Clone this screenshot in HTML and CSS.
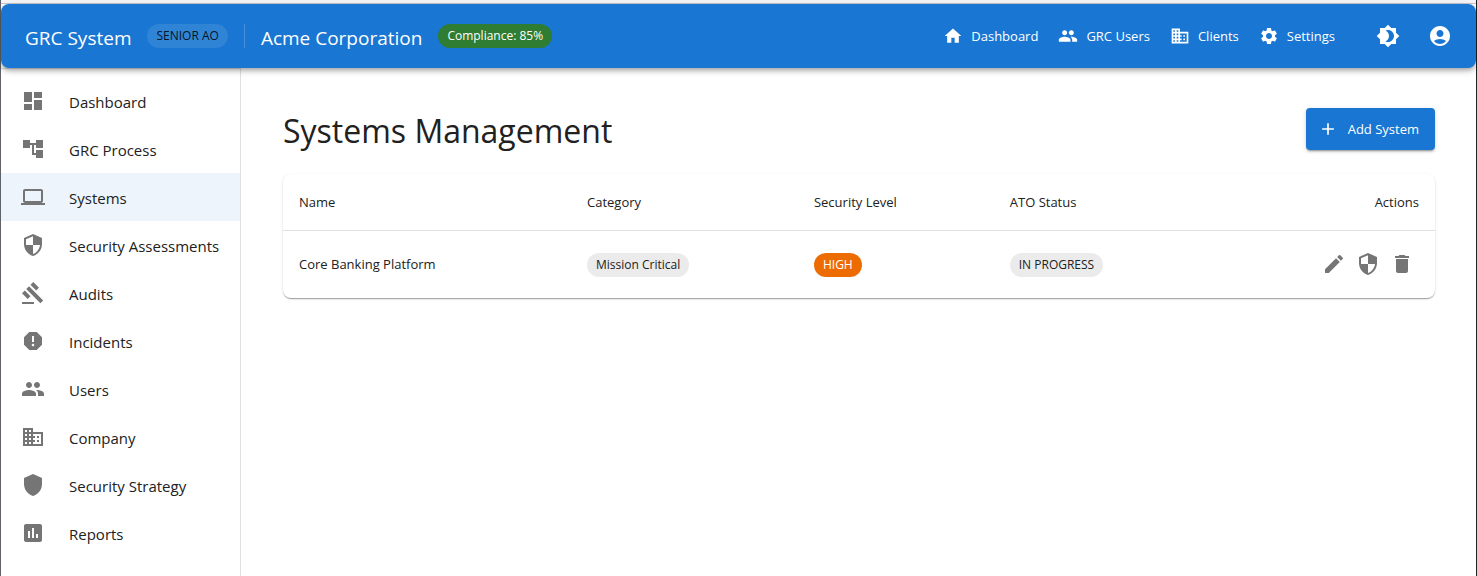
FILE: index.html
```html
<!DOCTYPE html>
<html lang="en">
<head>
<meta charset="utf-8">
<meta name="viewport" content="width=device-width, initial-scale=1">
<title>Systems Management</title>
<link rel="stylesheet" href="styles.css">
</head>
<body>
<svg class="sprite" aria-hidden="true">
  <symbol id="i-home" viewBox="0 0 24 24"><path d="M10 20v-6h4v6h5v-8h3L12 3 2 12h3v8z"/></symbol>
  <symbol id="i-people" viewBox="0 0 24 24"><path d="M16 11c1.66 0 2.99-1.34 2.99-3S17.66 5 16 5c-1.66 0-3 1.34-3 3s1.34 3 3 3zm-8 0c1.66 0 2.99-1.34 2.99-3S9.66 5 8 5C6.34 5 5 6.34 5 8s1.34 3 3 3zm0 2c-2.33 0-7 1.17-7 3.5V19h14v-2.5c0-2.33-4.67-3.5-7-3.5zm8 0c-.29 0-.62.02-.97.05 1.16.84 1.97 1.97 1.97 3.45V19h6v-2.5c0-2.33-4.67-3.5-7-3.5z"/></symbol>
  <symbol id="i-business" viewBox="0 0 24 24"><path d="M12 7V3H2v18h20V7H12zM6 19H4v-2h2v2zm0-4H4v-2h2v2zm0-4H4V9h2v2zm0-4H4V5h2v2zm4 12H8v-2h2v2zm0-4H8v-2h2v2zm0-4H8V9h2v2zm0-4H8V5h2v2zm10 12h-8v-2h2v-2h-2v-2h2v-2h-2V9h8v10zm-2-8h-2v2h2v-2zm0 4h-2v2h2v-2z"/></symbol>
  <symbol id="i-settings" viewBox="0 0 24 24"><path d="M19.14 12.94c.04-.3.06-.61.06-.94 0-.32-.02-.64-.07-.94l2.03-1.58c.18-.14.23-.41.12-.61l-1.92-3.32c-.12-.22-.37-.29-.59-.22l-2.39.96c-.5-.38-1.03-.7-1.62-.94l-.36-2.54c-.04-.24-.24-.41-.48-.41h-3.84c-.24 0-.43.17-.47.41l-.36 2.54c-.59.24-1.13.57-1.62.94l-2.39-.96c-.22-.08-.47 0-.59.22L2.74 8.87c-.12.21-.08.47.12.61l2.03 1.58c-.05.3-.09.63-.09.94s.02.64.07.94l-2.03 1.58c-.18.14-.23.41-.12.61l1.92 3.32c.12.22.37.29.59.22l2.39-.96c.5.38 1.03.7 1.62.94l.36 2.54c.05.24.24.41.48.41h3.84c.24 0 .44-.17.47-.41l.36-2.54c.59-.24 1.13-.56 1.62-.94l2.39.96c.22.08.47 0 .59-.22l1.92-3.32c.12-.22.07-.47-.12-.61l-2.01-1.58zM12 15.6c-1.98 0-3.6-1.62-3.6-3.6s1.62-3.6 3.6-3.6 3.6 1.62 3.6 3.6-1.62 3.6-3.6 3.6z"/></symbol>
  <symbol id="i-theme" viewBox="0 0 24 24"><path d="M20 8.69V4h-4.69L12 .69 8.69 4H4v4.69L.69 12 4 15.31V20h4.69L12 23.31 15.31 20H20v-4.69L23.31 12 20 8.69zM12 18c-.89 0-1.74-.2-2.5-.55C11.56 16.5 13 14.42 13 12s-1.44-4.5-3.5-5.45C10.26 6.2 11.11 6 12 6c3.31 0 6 2.69 6 6s-2.69 6-6 6z"/></symbol>
  <symbol id="i-account" viewBox="0 0 24 24"><path d="M12 2C6.48 2 2 6.48 2 12s4.48 10 10 10 10-4.48 10-10S17.52 2 12 2zm0 4c1.93 0 3.5 1.57 3.5 3.5S13.93 13 12 13s-3.5-1.57-3.5-3.5S10.07 6 12 6zm0 14c-2.03 0-4.43-.82-6.14-2.88C7.55 15.8 9.68 15 12 15s4.45.8 6.14 2.12C16.43 19.18 14.03 20 12 20z"/></symbol>
  <symbol id="i-dashboard" viewBox="0 0 24 24"><path d="M3 13h8V3H3v10zm0 8h8v-6H3v6zm10 0h8V11h-8v10zm0-18v6h8V3h-8z"/></symbol>
  <symbol id="i-tree" viewBox="0 0 24 24"><path d="M22 11V3h-7v3H9V3H2v8h7V8h2v10h4v3h7v-8h-7v3h-2V8h2v3z"/></symbol>
  <symbol id="i-computer" viewBox="0 0 24 24"><path d="M20 18c1.1 0 1.99-.9 1.99-2L22 6c0-1.1-.9-2-2-2H4c-1.1 0-2 .9-2 2v10c0 1.1.9 2 2 2H0v2h24v-2h-4zM4 6h16v10H4V6z"/></symbol>
  <symbol id="i-security" viewBox="0 0 24 24"><path d="M12 1 3 5v6c0 5.55 3.84 10.74 9 12 5.16-1.26 9-6.45 9-12V5l-9-4zm0 10.99h7c-.53 4.12-3.28 7.79-7 8.94V12H5V6.3l7-3.11v8.8z"/></symbol>
  <symbol id="i-gavel" viewBox="0 0 24 24"><path d="M1 21h12v2H1zM5.245 8.07l2.83-2.827 14.14 14.142-2.828 2.828zM12.317 1l5.657 5.656-2.83 2.83-5.654-5.66zM3.825 9.485l5.657 5.657-2.828 2.828-5.657-5.657z"/></symbol>
  <symbol id="i-report" viewBox="0 0 24 24"><path d="M15.73 3H8.27L3 8.27v7.46L8.27 21h7.46L21 15.73V8.27L15.73 3zM12 17.3c-.72 0-1.3-.58-1.3-1.3 0-.72.58-1.3 1.3-1.3.72 0 1.3.58 1.3 1.3 0 .72-.58 1.3-1.3 1.3zm1-4.3h-2V7h2v6z"/></symbol>
  <symbol id="i-shield" viewBox="0 0 24 24"><path d="M12 1 3 5v6c0 5.55 3.84 10.74 9 12 5.16-1.26 9-6.45 9-12V5l-9-4z"/></symbol>
  <symbol id="i-assessment" viewBox="0 0 24 24"><path d="M19 3H5c-1.1 0-2 .9-2 2v14c0 1.1.9 2 2 2h14c1.1 0 2-.9 2-2V5c0-1.1-.9-2-2-2zM9 17H7v-7h2v7zm4 0h-2V7h2v10zm4 0h-2v-4h2v4z"/></symbol>
  <symbol id="i-add" viewBox="0 0 24 24"><path d="M19 13h-6v6h-2v-6H5v-2h6V5h2v6h6v2z"/></symbol>
  <symbol id="i-edit" viewBox="0 0 24 24"><path d="M3 17.25V21h3.75L17.81 9.94l-3.75-3.75L3 17.25zM20.71 7.04c.39-.39.39-1.02 0-1.41l-2.34-2.34a.9959.9959 0 0 0-1.41 0l-1.83 1.83 3.75 3.75 1.83-1.83z"/></symbol>
  <symbol id="i-delete" viewBox="0 0 24 24"><path d="M6 19c0 1.1.9 2 2 2h8c1.1 0 2-.9 2-2V7H6v12zM19 4h-3.5l-1-1h-5l-1 1H5v2h14V4z"/></symbol>
</svg>

<div class="app">
  <header class="appbar">
    <span class="appbar-title">GRC System</span>
    <span class="chip chip-role">SENIOR AO</span>
    <span class="appbar-divider"></span>
    <span class="appbar-title">Acme Corporation</span>
    <span class="chip chip-success">Compliance: 85%</span>
    <nav class="topnav" aria-label="Primary">
      <a class="topnav-link" href="#"><svg class="icon icon-small"><use href="#i-home"/></svg>Dashboard</a>
      <a class="topnav-link" href="#"><svg class="icon icon-small"><use href="#i-people"/></svg>GRC Users</a>
      <a class="topnav-link" href="#"><svg class="icon icon-small"><use href="#i-business"/></svg>Clients</a>
      <a class="topnav-link" href="#"><svg class="icon icon-small"><use href="#i-settings"/></svg>Settings</a>
    </nav>
    <div class="appbar-tools">
      <button class="icon-button" type="button" aria-label="Toggle theme"><svg class="icon"><use href="#i-theme"/></svg></button>
      <button class="icon-button" type="button" aria-label="Account"><svg class="icon"><use href="#i-account"/></svg></button>
    </div>
  </header>

  <div class="body">
    <nav class="sidebar" aria-label="Sections">
      <a class="side-link" href="#"><svg class="icon"><use href="#i-dashboard"/></svg><span class="side-label">Dashboard</span></a>
      <a class="side-link" href="#"><svg class="icon"><use href="#i-tree"/></svg><span class="side-label">GRC Process</span></a>
      <a class="side-link side-link-active" href="#" aria-current="page"><svg class="icon"><use href="#i-computer"/></svg><span class="side-label">Systems</span></a>
      <a class="side-link" href="#"><svg class="icon"><use href="#i-security"/></svg><span class="side-label">Security Assessments</span></a>
      <a class="side-link" href="#"><svg class="icon"><use href="#i-gavel"/></svg><span class="side-label">Audits</span></a>
      <a class="side-link" href="#"><svg class="icon"><use href="#i-report"/></svg><span class="side-label">Incidents</span></a>
      <a class="side-link" href="#"><svg class="icon"><use href="#i-people"/></svg><span class="side-label">Users</span></a>
      <a class="side-link" href="#"><svg class="icon"><use href="#i-business"/></svg><span class="side-label">Company</span></a>
      <a class="side-link" href="#"><svg class="icon"><use href="#i-shield"/></svg><span class="side-label">Security Strategy</span></a>
      <a class="side-link" href="#"><svg class="icon"><use href="#i-assessment"/></svg><span class="side-label">Reports</span></a>
    </nav>

    <main class="main">
      <div class="page-head">
        <h1 class="page-title">Systems Management</h1>
        <button class="add-button" type="button"><svg class="icon icon-small"><use href="#i-add"/></svg>Add System</button>
      </div>
      <div class="card">
        <table class="table">
          <colgroup><col class="col-name"><col class="col-category"><col class="col-level"><col class="col-status"><col></colgroup>
          <thead>
            <tr><th>Name</th><th>Category</th><th>Security Level</th><th>ATO Status</th><th class="cell-right">Actions</th></tr>
          </thead>
          <tbody>
            <tr>
              <td>Core Banking Platform</td>
              <td><span class="chip">Mission Critical</span></td>
              <td><span class="chip chip-warning">HIGH</span></td>
              <td><span class="chip">IN PROGRESS</span></td>
              <td>
                <div class="actions">
                  <button class="icon-button" type="button" aria-label="Edit"><svg class="icon"><use href="#i-edit"/></svg></button>
                  <button class="icon-button" type="button" aria-label="Security"><svg class="icon"><use href="#i-security"/></svg></button>
                  <button class="icon-button" type="button" aria-label="Delete"><svg class="icon"><use href="#i-delete"/></svg></button>
                </div>
              </td>
            </tr>
          </tbody>
        </table>
      </div>
    </main>
  </div>
</div>
</body>
</html>
```
FILE: styles.css
```css
* {
  box-sizing: border-box;
}

body {
  margin: 0;
  background: #fff;
  color: #212121;
  font-family: "Segoe UI", "Open Sans", "Noto Sans", sans-serif;
  font-size: 13px;
}

.sprite {
  display: none;
}

.app {
  display: flex;
  flex-direction: column;
  min-height: 100vh;
  border-left: 1px solid #5f6368;
  border-right: 1px solid #202124;
}

.app::before {
  content: "";
  height: 3px;
  background: #f7f7f9;
  border-bottom: 1px solid #c8c8cc;
}

.icon {
  display: block;
  flex: none;
  width: 24px;
  height: 24px;
  fill: currentColor;
}

.icon-small {
  width: 20px;
  height: 20px;
}

.icon-button {
  display: flex;
  padding: 5px;
  border: 0;
  background: none;
  color: inherit;
  cursor: pointer;
}

/* Top bar */

.appbar {
  position: relative;
  display: flex;
  align-items: center;
  gap: 16px;
  height: 64px;
  padding: 0 19px 0 24px;
  border-radius: 8px;
  background: #1976d2;
  color: #fff;
  box-shadow: 0 2px 4px -1px rgba(0, 0, 0, 0.2), 0 4px 5px rgba(0, 0, 0, 0.14), 0 1px 10px rgba(0, 0, 0, 0.12);
}

.appbar-title {
  padding-top: 4px;
  font-size: 19px;
  line-height: 32px;
  white-space: nowrap;
}

.appbar-divider {
  width: 1px;
  height: 24px;
  background: rgba(255, 255, 255, 0.2);
}

.chip {
  display: inline-block;
  padding: 0 9px;
  border-radius: 12px;
  background: #ebebeb;
  font-size: 12px;
  line-height: 24px;
  white-space: nowrap;
  vertical-align: middle;
}

.chip-role {
  background: rgba(255, 255, 255, 0.1);
  color: rgba(0, 0, 0, 0.87);
}

.chip-success {
  background: #2e7d32;
  color: #fff;
}

.chip-warning {
  background: #ed6c02;
  color: #fff;
}

.topnav {
  display: flex;
  gap: 20px;
  margin-left: auto;
}

.topnav-link {
  display: flex;
  align-items: center;
  gap: 8px;
  color: inherit;
  font-size: 13px;
  line-height: 24px;
  text-decoration: none;
  white-space: nowrap;
}

.appbar-tools {
  display: flex;
  gap: 18px;
  margin-left: 20px;
}

/* Side menu and page */

.body {
  display: flex;
  flex: 1;
}

.sidebar {
  flex: none;
  width: 240px;
  padding: 8px 0;
  border-top: 1px solid #e0e0e0;
  border-right: 1px solid #e0e0e0;
}

.side-link {
  display: flex;
  align-items: center;
  gap: 24px;
  height: 48px;
  padding-left: 20px;
  color: #757575;
  font-size: 15px;
  line-height: 24px;
  text-decoration: none;
}

.side-label {
  padding-top: 2px;
  color: #212121;
  white-space: nowrap;
}

.side-link-active {
  background: #edf4fb;
}

.main {
  flex: 1;
  min-width: 0;
  padding: 40px 41px 40px 42px;
}

.page-head {
  display: flex;
  align-items: center;
  justify-content: space-between;
  margin-bottom: 24px;
}

.page-title {
  margin: 0;
  padding-top: 4px;
  font-size: 32px;
  font-weight: 400;
  line-height: 38px;
}

.add-button {
  display: flex;
  align-items: center;
  gap: 10px;
  height: 42px;
  padding: 0 16px 0 12px;
  border: 0;
  border-radius: 4px;
  background: #1976d2;
  color: #fff;
  font: inherit;
  box-shadow: 0 3px 1px -2px rgba(0, 0, 0, 0.2), 0 2px 2px rgba(0, 0, 0, 0.14), 0 1px 5px rgba(0, 0, 0, 0.12);
  cursor: pointer;
}

.card {
  border-radius: 8px;
  background: #fff;
  box-shadow: 0 2px 1px -1px rgba(0, 0, 0, 0.2), 0 1px 1px rgba(0, 0, 0, 0.14), 0 1px 3px rgba(0, 0, 0, 0.12);
}

.table {
  width: 100%;
  border-collapse: collapse;
  table-layout: fixed;
}

.col-name {
  width: 25%;
}

.col-category {
  width: 19.7%;
}

.col-level {
  width: 17%;
}

.col-status {
  width: 20%;
}

.table th,
.table td {
  padding: 16px;
  font-size: 13px;
  font-weight: 400;
  line-height: 24px;
  text-align: left;
}

.table th {
  border-bottom: 1px solid #e0e0e0;
}

.table tbody tr {
  height: 67px;
}

.table .cell-right {
  text-align: right;
}

.actions {
  display: flex;
  justify-content: flex-end;
  color: #757575;
}
```
